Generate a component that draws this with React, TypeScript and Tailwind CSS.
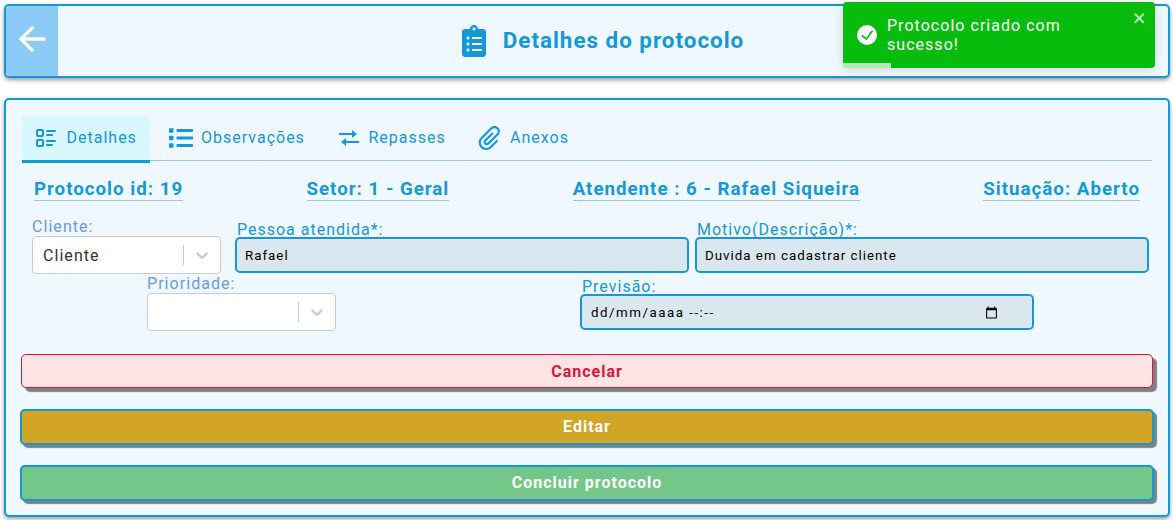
import { type ReactNode } from "react";
import { MdArrowBack } from "react-icons/md";
import { FaClipboardList, FaList } from "react-icons/fa";
import { TbListDetails } from "react-icons/tb";
import { ImAttachment } from "react-icons/im";

function TransferIcon() {
  return (
    <svg width="24" height="24" viewBox="0 0 24 24" fill="currentColor">
      <path d="m15 12 5-4-5-4v2.999H2v2h13zm7 3H9v-3l-5 4 5 4v-3h13z" />
    </svg>
  );
}

function Tab({ icon, label, className }: { icon: ReactNode; label: string; className: string }) {
  return (
    <div className={`flex items-center ${className}`}>
      {icon}
      <span className="text-[16px] leading-5 tracking-[1px]">{label}</span>
    </div>
  );
}

function Heading({ children }: { children: ReactNode }) {
  return (
    <span className="h-[23px] border-b border-[#a3c4dc] text-[18.72px] leading-[23px] font-bold tracking-[1px] whitespace-nowrap">
      {children}
    </span>
  );
}

function SelectBox({ label, value }: { label: string; value: string }) {
  return (
    <div className="w-[189px]">
      <div className="h-[19px] text-[16px] leading-[19px] tracking-[1.05px] text-[#6c9bdb]">{label}</div>
      <div className="flex h-[38px] items-center rounded border border-[#ccc] bg-white">
        <span className="flex-1 pt-0.5 pl-2.5 text-[16px] tracking-[1.05px] text-[#333]">{value}</span>
        <span className="h-5 w-px bg-[#ccc]" />
        <span className="p-2 text-[#ccc]">
          <svg width="20" height="20" viewBox="0 0 20 20" fill="currentColor">
            <path d="M4.516 7.548c0.436-0.446 1.043-0.481 1.576 0l3.908 3.747 3.908-3.747c0.533-0.481 1.141-0.446 1.574 0 0.436 0.445 0.408 1.197 0 1.615-0.406 0.418-4.695 4.502-4.695 4.502-0.217 0.223-0.502 0.335-0.787 0.335s-0.57-0.112-0.789-0.335c0 0-4.287-4.084-4.695-4.502s-0.436-1.17 0-1.615z" />
          </svg>
        </span>
      </div>
    </div>
  );
}

function Field({ label, children }: { label: string; children: ReactNode }) {
  return (
    <div className="w-[454px]">
      <div className="h-[17px] pl-0.5 text-[16px] leading-[19px] tracking-[1px]">{label}</div>
      <div className="flex h-9 items-center rounded-[5px] border-2 border-[#1599d6] bg-[#dbe7ef] pl-2 text-[13.333px] text-black">
        {children}
      </div>
    </div>
  );
}

export default function App() {
  return (
    <div className="h-[520px] w-[1173px] overflow-hidden bg-white px-1 pt-1 font-['Roboto',sans-serif] text-[#1599d6]">
      <header className="flex h-[74px] w-[1166px] items-stretch rounded-[5px] border-2 border-[#1599d6] bg-[#eff7ff] shadow-[0_2px_4px_rgba(0,0,0,0.4)]">
        <div className="flex w-[52px] items-center justify-center rounded-l-[3px] bg-[#8bcbf5] pb-1 text-white">
          <MdArrowBack size={40} />
        </div>
        <div className="flex flex-1 items-center justify-center pr-[24px]">
          <FaClipboardList size={32} />
          <h1 className="ml-[13px] pb-0.5 text-[22.4px] leading-7 font-bold tracking-[1px]">Detalhes do protocolo</h1>
        </div>
      </header>

      <main className="mt-5 h-[419px] w-[1166px] rounded-[5px] border-2 border-[#1599d6] bg-[#eff7ff] px-[14px] pt-4 shadow-[0_2px_4px_rgba(0,0,0,0.4)]">
        <nav className="mx-0.5 flex h-[45px] w-[1130px] items-start border-b border-[#a3c4dc]">
          <Tab className="h-[47px] w-32 gap-[8.5px] border-b-[3px] border-[#1599d6] bg-[#d9f7ff] pl-3" icon={<TbListDetails size={24} />} label="Detalhes" />
          <Tab className="h-11 w-[169px] gap-2 pl-[19px]" icon={<FaList size={24} />} label="Observações" />
          <Tab className="h-11 w-[141px] gap-[7.5px] pl-[18px]" icon={<TransferIcon />} label="Repasses" />
          <Tab className="h-11 gap-2 pl-[18px]" icon={<ImAttachment size={24} />} label="Anexos" />
        </nav>
        <div className="mt-[17px] flex justify-between pr-[14px] pl-[14px]">
          <Heading>Protocolo id: 19</Heading>
          <Heading>Setor: 1 - Geral</Heading>
          <Heading>Atendente : 6 - Rafael Siqueira</Heading>
          <Heading>Situação: Aberto</Heading>
        </div>
        <div className="mt-4 flex pl-3">
          <SelectBox label="Cliente:" value="Cliente" />
          <div className="flex gap-1.5 pt-[3px] pl-3.5">
            <Field label="Pessoa atendida*:"><span className="pt-px tracking-[1px]">Rafael</span></Field>
            <Field label="Motivo(Descrição)*:"><span className="pt-px tracking-[1px]">Duvida em cadastrar cliente</span></Field>
          </div>
        </div>
        <div className="flex pl-[127px]">
          <SelectBox label="Prioridade:" value="" />
          <div className="pt-[3px] pl-[244px]">
            <Field label="Previsão:">
              <span className="flex-1 pt-px pl-px tracking-[1.5px]">dd/mm/aaaa --:--</span>
              <svg className="mr-[34px]" width="13" height="13" viewBox="0 0 24 24" fill="currentColor">
                <path d="M20 3h-1V1h-2v2H7V1H5v2H4c-1.1 0-2 .9-2 2v16c0 1.1.9 2 2 2h16c1.1 0 2-.9 2-2V5c0-1.1-.9-2-2-2zm0 18H4V8h16v13z" />
              </svg>
            </Field>
          </div>
        </div>
        <div className="mt-[23px] flex flex-col text-center text-[16px] font-bold tracking-[1px]">
          <button className="mx-px h-[34px] rounded-[5px] border border-[#dc143c] bg-[#fce4e4] pt-0.5 text-[#dc143c] shadow-[4px_4px_1px_gray]">Cancelar</button>
          <button className="mt-[21px] h-9 rounded-[5px] border-2 border-[#1599d6] bg-[#d2a527] text-white shadow-[3px_3px_1px_gray]">Editar</button>
          <button className="mt-5 h-9 rounded-[5px] border-2 border-[#1599d6] bg-[#74c788] text-white shadow-[3px_3px_1px_gray]">Concluir protocolo</button>
        </div>
      </main>

      <div className="absolute top-[2px] left-[843px] flex h-[66px] w-[312px] items-center overflow-hidden rounded bg-[#07bc0c] pl-3.5 text-white shadow-[0_1px_10px_rgba(0,0,0,0.1),0_2px_15px_rgba(0,0,0,0.05)]">
        <svg width="20" height="20" viewBox="0 0 24 24" fill="currentColor">
          <path d="M12 0a12 12 0 1012 12A12.014 12.014 0 0012 0zm6.927 8.2l-6.845 9.289a1.011 1.011 0 01-1.43.188l-4.888-3.908a1 1 0 111.25-1.562l4.076 3.261 6.227-8.451a1 1 0 111.61 1.183z" />
        </svg>
        <p className="ml-2.5 w-[210px] text-[16px] leading-[19px] tracking-[1.03px]">Protocolo criado com sucesso!</p>
        <svg className="absolute top-2 right-2 opacity-70" width="14" height="16" viewBox="0 0 14 16" fill="currentColor">
          <path fillRule="evenodd" d="M7.71 8.23l3.75 3.75-1.48 1.48-3.75-3.75-3.75 3.75L1 11.98l3.75-3.75L1 4.48 2.48 3l3.75 3.75L9.98 3l1.48 1.48-3.75 3.75z" />
        </svg>
        <div className="absolute bottom-0 left-0 h-[5px] w-12 bg-white/70" />
      </div>
    </div>
  );
}
